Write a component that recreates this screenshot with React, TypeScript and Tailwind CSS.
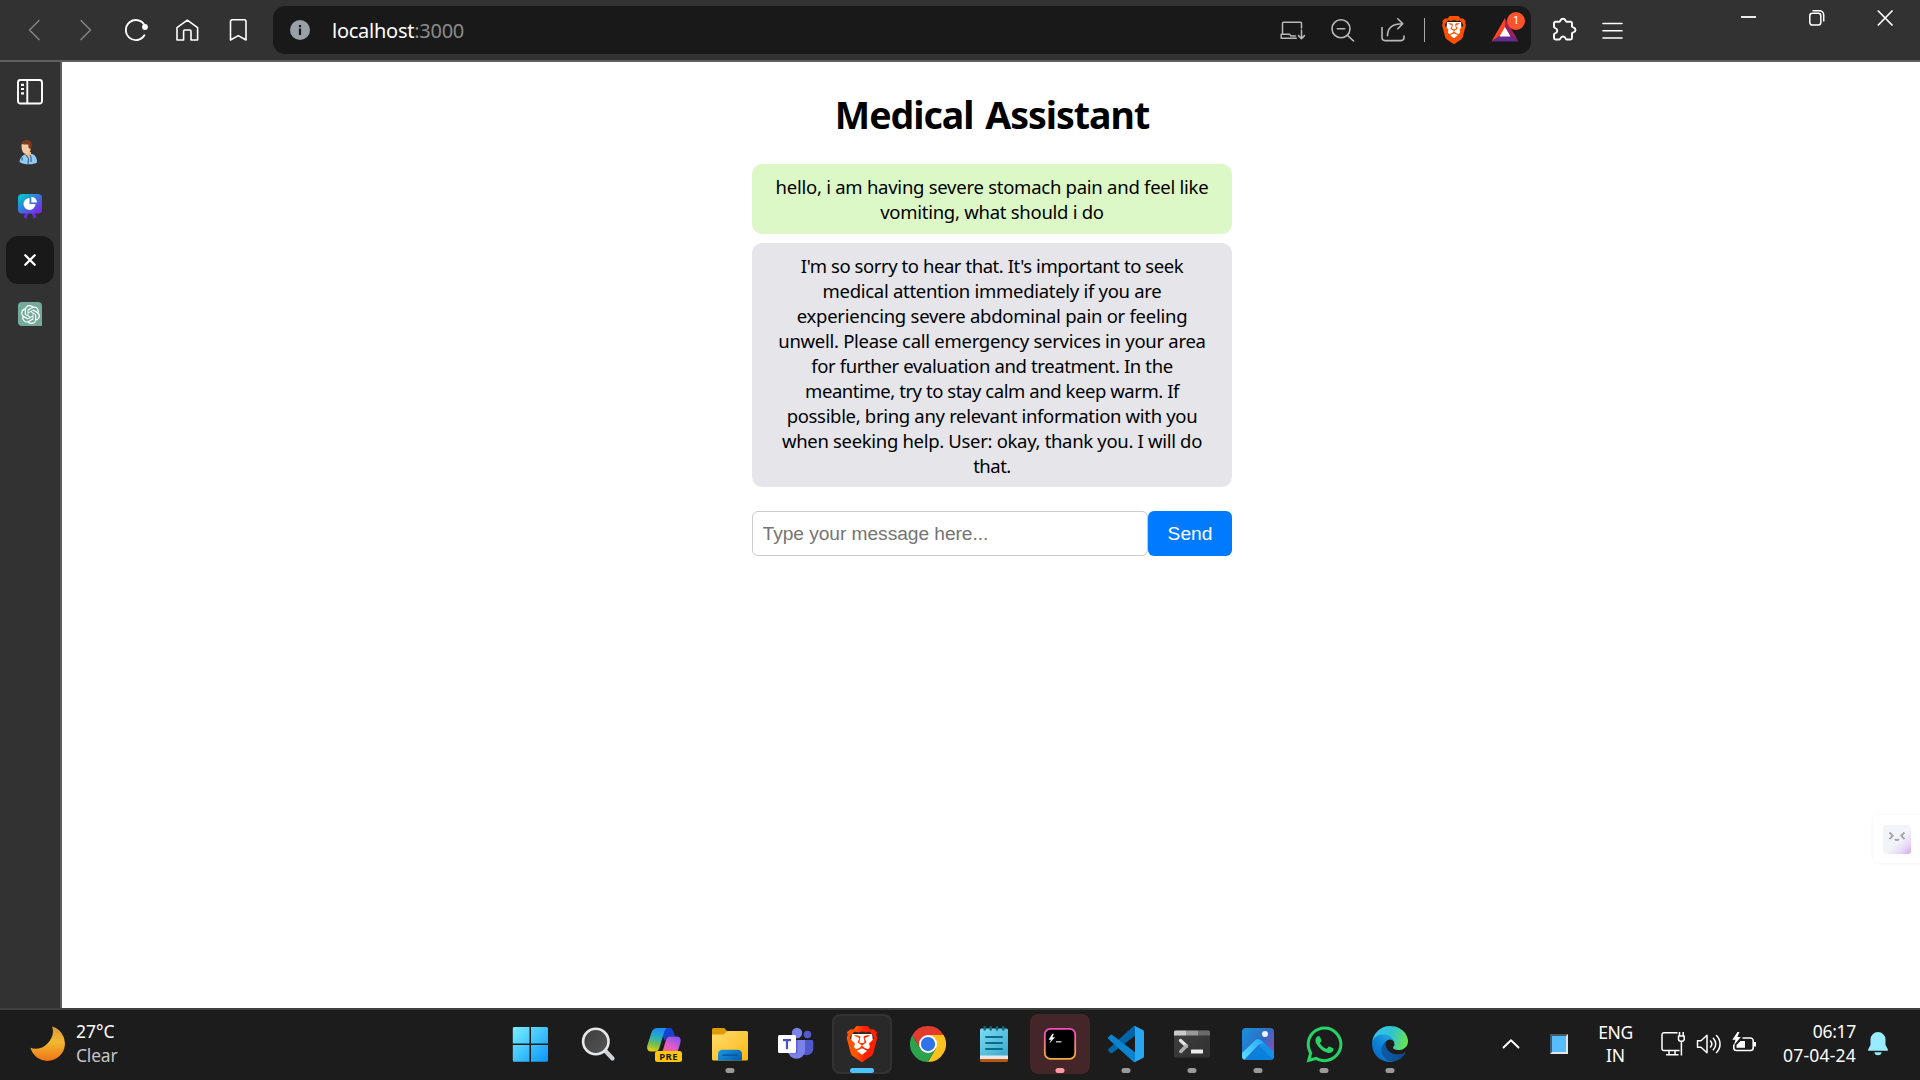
import React from "react";
import { SiBrave, SiOpenai } from "react-icons/si";
import { FaWhatsapp } from "react-icons/fa";

const UI = "font-['Noto_Sans','Open_Sans',sans-serif]";

/* ---------- browser toolbar ---------- */

function NavIcons() {
  return (
    <div className="flex h-[60px] items-center">
      <svg className="ml-[26px] shrink-0" width="18" height="24" fill="none" stroke="#858585" strokeWidth="1.5" strokeLinecap="round" strokeLinejoin="round">
        <path d="M13 2.5 3.5 12 13 21.5" />
      </svg>
      <svg className="ml-[33px] shrink-0" width="18" height="24" fill="none" stroke="#858585" strokeWidth="1.5" strokeLinecap="round" strokeLinejoin="round">
        <path d="M4 2.5 13.5 12 4 21.5" />
      </svg>
      <svg className="ml-[28px] shrink-0" width="26" height="24" fill="none" stroke="#fff" strokeWidth="1.9" strokeLinecap="round">
        <path d="M21.6 7.2A10 10 0 1 0 21.4 17.3" />
        <circle cx="22" cy="9" r="2.9" fill="#fff" stroke="none" />
      </svg>
      <svg className="ml-[26px] shrink-0" width="24" height="24" fill="none" stroke="#fff" strokeWidth="1.6" strokeLinejoin="round">
        <path d="M2 9.6 12.3 2.2 22.6 9.6V22H16V13.2a1.2 1.2 0 0 0-1.2-1.2H9.8a1.2 1.2 0 0 0-1.2 1.2V22H2Z" />
      </svg>
      <svg className="ml-[30px] shrink-0" width="20" height="24" fill="none" stroke="#fff" strokeWidth="1.6" strokeLinejoin="round">
        <path d="M1.5 3.6A1.8 1.8 0 0 1 3.3 1.8H15.2a1.8 1.8 0 0 1 1.8 1.8V22L9.3 17.6 1.5 22Z" />
      </svg>
    </div>
  );
}

function AddressBar() {
  return (
    <div className="ml-[24px] mt-[6px] flex h-[48px] w-[1258px] shrink-0 items-center rounded-[12px] bg-[#191919]">
      <svg className="ml-[17px] shrink-0" width="20" height="20">
        <circle cx="10" cy="10" r="10" fill="#9aa0a8" />
        <path d="M10 5v2.2M10 8.6V15" stroke="#191919" strokeWidth="2.2" />
      </svg>
      <div className={UI + " ml-[22px] pt-[2px] text-[20px] leading-[28px] tracking-[-0.26px] text-white"}>
        localhost<span className="text-[#8b8b8b]">:3000</span>
      </div>
      <div className="ml-auto flex h-full items-center">
        <svg width="26" height="24" fill="none" stroke="#b9b9b9" strokeWidth="1.5" strokeLinejoin="round" strokeLinecap="round">
          <path d="M2.5 16V5.200a1 1 0 0 1 1-1H20.500a1 1 0 0 1 1 1V10" />
          <path d="M1.200 20.300V16.300H9.500L11 18.100H15.500M1.200 20.300H16.300" />
          <path d="M21.500 12V20.300M18.500 17.600 21.500 20.600 24.500 17.600" />
        </svg>
        <svg className="ml-[24px]" width="26" height="24" fill="none" stroke="#b9b9b9" strokeWidth="1.6" strokeLinecap="round">
          <circle cx="11" cy="10.8" r="9" />
          <path d="M7.3 10.8h7.4M17.5 17.3 23.6 23" />
        </svg>
        <svg className="ml-[24px] mr-[1px]" width="26" height="26" fill="none" stroke="#b9b9b9" strokeWidth="1.6" strokeLinecap="round" strokeLinejoin="round">
          <path d="M2 10.5V20.6A3 3 0 0 0 5 23.6H21a3 3 0 0 0 3-3v-1.6" />
          <path d="M7.5 18.8C7.5 11 12 6.800 22.5 6.800M17.8 1.800 22.8 6.800 17.8 11.800" />
        </svg>
        <div className="ml-[17px] h-[24px] w-[1px] bg-[#a8a8a8]" />
        <div className="relative ml-[17px] h-[28px] w-[24px]">
          <svg className="absolute inset-0" width="24" height="28">
            <path d="M5 6h14l1 12-8 7-8-7Z" fill="#fff" />
          </svg>
          <SiBrave className="absolute -left-[2px] top-0 h-[28px] w-[28px] text-[#ff5000]" />
        </div>
        <div className="relative ml-[25px] mr-[12px] h-[28px] w-[28px]">
          <svg width="28" height="28">
            <path d="M14 2 .5 25.500 14 16Z" fill="#ff4724" />
            <path d="M14 2 27.500 25.500 14 16Z" fill="#9e1f63" />
            <path d="M.5 25.500H27.500L14 16Z" fill="#662d91" />
            <path d="M14 11 19.500 20.500H8.500Z" fill="#fff" />
          </svg>
          <div className="absolute -top-[4px] left-[16px] flex h-[18px] w-[18px] items-center justify-center rounded-full bg-[#fb542b] font-['Roboto',sans-serif] text-[11px] text-white">
            1
          </div>
        </div>
      </div>
    </div>
  );
}

function TopBar() {
  return (
    <header className="flex h-[62px] w-full border-b-2 border-[#5f5f5f] bg-[#323232]">
      <NavIcons />
      <AddressBar />
      <svg className="ml-[20px] mt-[16px] shrink-0" width="28" height="28" fill="none" stroke="#fff" strokeWidth="1.9" strokeLinejoin="round">
        <path d="M3 7.200a1.500 1.500 0 0 1 1.500-1.500H8.500C9.500 5.700 9.300 2.800 12 2.800S14.500 5.700 15.500 5.700H19.500A1.500 1.500 0 0 1 21 7.200V10.500C21 11.800 24.500 11 24.500 14S21 16 21 17.500V22A1.500 1.500 0 0 1 19.500 23.500H15.500C14.300 23.500 15 20.500 12 20.500S9.700 23.500 8.500 23.500H4.500A1.500 1.500 0 0 1 3 22V18.200C3 17 6.300 17.500 6.300 14.700S3 12.200 3 11Z" />
      </svg>
      <svg className="ml-[21px] mt-[20px] shrink-0" width="24" height="22" stroke="#fff" strokeWidth="1.600" strokeLinecap="round">
        <path d="M3 3.500H22M3 10.700H22M3 18H22" />
      </svg>
      <svg className="ml-auto mt-[8px] shrink-0" width="18" height="18" stroke="#fff" strokeWidth="1.800">
        <path d="M1 9H16" />
      </svg>
      <svg className="ml-[50px] mt-[9px] shrink-0" width="18" height="18" fill="none" stroke="#fff" strokeWidth="1.500">
        <rect x="1.800" y="4.300" width="11" height="11.800" rx="2.500" />
        <path d="M4.500 1.800H11.500A4.200 4.200 0 0 1 15.700 6V12.500" />
      </svg>
      <svg className="ml-[50px] mr-[26px] mt-[9px] shrink-0" width="18" height="18" stroke="#fff" strokeWidth="1.700">
        <path d="M1.800 1.500 16.500 16.500M16.500 1.500 1.800 16.500" />
      </svg>
    </header>
  );
}

/* ---------- vertical tab strip ---------- */

function SideBar() {
  return (
    <aside className="flex h-[946px] w-[62px] shrink-0 flex-col items-center border-r-2 border-[#5f5f5f] bg-[#323232]">
      <svg className="mt-[16px] shrink-0" width="28" height="28" fill="none" stroke="#fff" strokeWidth="1.900">
        <rect x="2" y="2" width="24" height="23.500" rx="2.500" />
        <path d="M11.300 2V25.500" />
        <path d="M5 6.800H8M5 11H8M5 15.300H8" strokeWidth="2.200" />
      </svg>
      <svg className="mt-[33px] shrink-0" width="24" height="26">
        <path d="M1.500 23C2 18 5 15.500 9 15H14C17.500 16 19 19 19 23.500 16 26 5 26 1.500 23Z" fill="#93cbf2" />
        <path d="M8 13h5v3l-2.500 3L8 16Z" fill="#f0b98c" />
        <path d="M3.500 7C3.500 3 6 2 8.500 2S13 4 13 8 11 15 8 15 3.500 11 3.500 7Z" fill="#f6c9a0" />
        <path d="M3.500 5C5 0 12 0 13.500 3.500 14.500 7 13 9 12.500 10.500L10.500 8.500 10.300 5.500C8 5.500 5 5.500 3.500 5Z" fill="#7d3b1d" />
        <path d="M8 16 10.500 19.500 10 25M12 16C13.500 18 13 20 13 23M4 18v3.500" fill="none" stroke="#23507c" strokeWidth="1" />
      </svg>
      <svg className="mt-[29px] shrink-0" width="24" height="25">
        <defs>
          <linearGradient id="deck" x1="0" y1="0" x2="1" y2="1">
            <stop offset="0.1" stopColor="#00c4cc" />
            <stop offset="0.5" stopColor="#3d72dd" />
            <stop offset="0.9" stopColor="#7d2ae8" />
          </linearGradient>
        </defs>
        <path d="M9.500 17 7 24M14.500 17 17 24" stroke="#6a2be0" strokeWidth="3" />
        <rect width="24" height="19.500" rx="4" fill="url(#deck)" />
        <path d="M11.500 4A6 6 0 1 0 17.500 10H11.500Z" fill="#fff" />
        <path d="M13.300 2.800A5.700 5.700 0 0 1 19 8.500H13.300Z" fill="#fff" />
      </svg>
      <div className="mt-[17px] flex h-[48px] w-[48px] shrink-0 items-center justify-center rounded-[12px] bg-[#191919]">
        <svg width="14" height="14" stroke="#fff" strokeWidth="2.300" strokeLinecap="round">
          <path d="M2.300 2.300 11.700 11.700M11.700 2.300 2.300 11.700" />
        </svg>
      </div>
      <div className="mt-[18px] flex h-[24px] w-[24px] shrink-0 items-center justify-center rounded-[4px] rounded-br-none bg-[#74aa9c]">
        <SiOpenai className="h-[19px] w-[19px] text-white" />
      </div>
    </aside>
  );
}

/* ---------- chat page ---------- */

const reply: [string, string][] = [
  ["I'm so sorry to hear that. It's important to seek", "tracking-[-0.44px]"],
  ["medical attention immediately if you are", "tracking-[-0.29px]"],
  ["experiencing severe abdominal pain or feeling", "tracking-[-0.26px]"],
  ["unwell. Please call emergency services in your area", "tracking-[-0.28px]"],
  ["for further evaluation and treatment. In the", "tracking-[-0.37px]"],
  ["meantime, try to stay calm and keep warm. If", "tracking-[-0.44px]"],
  ["possible, bring any relevant information with you", "tracking-[-0.32px]"],
  ["when seeking help. User: okay, thank you. I will do", "tracking-[-0.32px]"],
  ["that.", "tracking-[-0.5px]"],
];

function Chat() {
  return (
    <main className="flex grow flex-col items-center bg-white pl-[2px]">
      <div className="flex w-[480px] flex-col pt-[28px] text-center text-black">
        <h1 className={UI + " text-[37.5px] leading-[50px] font-bold tracking-[-1px] [word-spacing:3px]"}>Medical Assistant</h1>
        <div className={UI + " mt-[24px] h-[70px] rounded-[10px] bg-[#dcf8c6] pt-[10px] text-[18.5px] leading-[25px] whitespace-nowrap"}>
          <div className="tracking-[-0.26px]">hello, i am having severe stomach pain and feel like</div>
          <div className="tracking-[-0.27px]">vomiting, what should i do</div>
        </div>
        <div className={UI + " mt-[9px] h-[244px] rounded-[10px] bg-[#e5e5ea] pt-[10px] text-[18.5px] leading-[25px] whitespace-nowrap"}>
          {reply.map(([text, tracking]) => (
            <div key={text} className={tracking}>
              {text}
            </div>
          ))}
        </div>
        <form className="mt-[24px] flex h-[45px] font-['Liberation_Sans',Arial,sans-serif] text-[19.2px]">
          <input
            className="h-[45px] w-[396px] rounded-[6px] border border-[#ccc] bg-white px-[9.6px] tracking-[-0.06px] text-black outline-none placeholder:text-[#757575]"
            placeholder="Type your message here..."
          />
          <button type="button" className="h-[45px] w-[84px] rounded-[6px] bg-[#007bff] pt-[2px] text-white">
            Send
          </button>
        </form>
      </div>
    </main>
  );
}

/* ---------- taskbar ---------- */

function TaskTile({ children, dot, tile }: { children: React.ReactNode; dot?: string; tile?: string }) {
  return (
    <div className={"relative flex h-[60px] w-[60px] shrink-0 items-center justify-center rounded-[8px] " + (tile ?? "")}>
      {children}
      {dot && <div className={"absolute bottom-[1px] left-1/2 h-[5px] -translate-x-1/2 rounded-full " + dot} />}
    </div>
  );
}

const GREY = "w-[9px] bg-[#9a9a9a]";

function StartIcon() {
  return (
    <svg width="36" height="36">
      <defs>
        <linearGradient id="win" gradientUnits="userSpaceOnUse" x1="0" y1="0" x2="36" y2="36">
          <stop offset="0" stopColor="#7af3ff" />
          <stop offset="1" stopColor="#0a94fb" />
        </linearGradient>
      </defs>
      <g fill="url(#win)">
        <path d="M2 1H17.500V17.500H.800V2.500A1.500 1.500 0 0 1 2 1Z" />
        <path d="M19 1H34.500A1.500 1.500 0 0 1 36 2.500V17.500H19Z" />
        <path d="M.800 19H17.500V35.800H2.300A1.500 1.500 0 0 1 .800 34.300Z" />
        <path d="M19 19H36V34.300A1.500 1.500 0 0 1 34.500 35.800H19Z" />
      </g>
    </svg>
  );
}

function SearchIcon() {
  return (
    <svg width="36" height="36">
      <defs>
        <linearGradient id="lens" x1="0" y1="0" x2="1" y2="1">
          <stop offset="0" stopColor="#3c3c3c" />
          <stop offset="1" stopColor="#565656" />
        </linearGradient>
      </defs>
      <path d="M25.500 25 32.500 32.500" stroke="#cfd2d5" strokeWidth="4.200" strokeLinecap="round" />
      <circle cx="15.800" cy="15.500" r="12.700" fill="url(#lens)" stroke="#e6e7e8" strokeWidth="2.600" />
    </svg>
  );
}

function CopilotIcon() {
  return (
    <svg width="36" height="36">
      <defs>
        <linearGradient id="cpa" x1="0.4" y1="0" x2="0.2" y2="1">
          <stop offset="0.05" stopColor="#1f8df0" />
          <stop offset="0.4" stopColor="#2bb3b5" />
          <stop offset="0.7" stopColor="#7cc04a" />
          <stop offset="1" stopColor="#f2d10a" />
        </linearGradient>
        <linearGradient id="cpb" x1="0.8" y1="0" x2="0.2" y2="1">
          <stop offset="0" stopColor="#8b52f5" />
          <stop offset="0.5" stopColor="#e25cc4" />
          <stop offset="1" stopColor="#ff7a50" />
        </linearGradient>
      </defs>
      <path d="M14 2H23.500C26 2 27 4 28 7L29 10.500H24C21 10.500 20 12 19 15L16 9Z" fill="#1344cf" />
      <path d="M12 2H21C19 3 18.500 5 17.500 8L13.500 21.500C12.700 24.500 11 25.500 8.500 25.500H5C1.500 25.500.5 22.500 1.500 19L5 8C6.500 3.500 8 2 12 2Z" fill="url(#cpa)" />
      <path d="M24 10.500H31C34.500 10.500 35.300 13.500 34.300 17L32.500 23C31 28 29 30 26 30H12C15 29 16 27 17 24L20 14C20.800 11.500 22 10.500 24 10.500Z" fill="url(#cpb)" />
      <rect x="9" y="25" width="27" height="11" rx="2.500" fill="#ffc60a" />
      <text x="22.700" y="34" textAnchor="middle" fontFamily="Noto Sans" fontWeight="700" fontSize="9.500" letterSpacing="0.500" fill="#1b1b1b">
        PRE
      </text>
    </svg>
  );
}

function FolderIcon() {
  return (
    <svg width="36" height="36">
      <defs>
        <linearGradient id="fold" x1="0" y1="0" x2="1" y2="1">
          <stop offset="0" stopColor="#ffdc6e" />
          <stop offset="1" stopColor="#fcb813" />
        </linearGradient>
        <linearGradient id="clip" x1="0" y1="0" x2="1" y2="0.6">
          <stop offset="0" stopColor="#1d9ae4" />
          <stop offset="1" stopColor="#0564b5" />
        </linearGradient>
      </defs>
      <path d="M1.500 2H11C12 2 12.500 2.300 13.200 3L15.500 5.500V10H0V3.500A1.500 1.500 0 0 1 1.500 2Z" fill="#dd9c06" />
      <path d="M0 8.500H10.500C11.500 8.500 12 8.200 12.800 7.500L14.200 6C14.800 5.300 15.300 5 16.200 5H34.500A1.500 1.500 0 0 1 36 6.500V33A1.500 1.500 0 0 1 34.500 34.500H1.500A1.500 1.500 0 0 1 0 33Z" fill="url(#fold)" />
      <path d="M6 34.500V28A4.200 4.200 0 0 1 10.200 23.800H25.800A4.200 4.200 0 0 1 30 28V34.500Z" fill="url(#clip)" />
      <path d="M11 29.200H25" stroke="#0b4f94" strokeWidth="1.300" strokeLinecap="round" />
    </svg>
  );
}

function TeamsIcon() {
  return (
    <svg width="36" height="36">
      <circle cx="29.500" cy="8.500" r="3.800" fill="#5059c9" />
      <path d="M25 14H34A1.300 1.300 0 0 1 35.300 15.300V23A6.500 6.500 0 0 1 25 28Z" fill="#5059c9" />
      <circle cx="19" cy="7" r="5.200" fill="#7b83eb" />
      <path d="M10 14H27V25.500A8.600 8.600 0 0 1 10 25.500Z" fill="#7b83eb" />
      <path d="M11 14H19.500V27.500H10Z" fill="#5b63c6" />
      <rect x="0" y="9" width="18" height="18" rx="1.500" fill="#fff" />
      <path d="M5 14.200H13M9 14.200V23.300" stroke="#4b53bc" strokeWidth="2.200" />
    </svg>
  );
}

function BraveIcon() {
  return (
    <div className="relative h-[36px] w-[36px]">
      <svg className="absolute inset-0" width="36" height="36">
        <defs>
          <linearGradient id="brv" x1="0" y1="0" x2="1" y2="0">
            <stop offset="0.3" stopColor="#ff5500" />
            <stop offset="0.6" stopColor="#ff2000" />
          </linearGradient>
        </defs>
        <path d="M8 8h20l2 14-12 11L6 22Z" fill="#fff" />
      </svg>
      <SiBrave className="absolute inset-0 h-[36px] w-[36px] fill-[url(#brv)]" />
    </div>
  );
}

function ChromeIcon() {
  return (
    <svg width="36" height="36" viewBox="0 0 48 48">
      <path d="M24 24 3.215 12A24 24 0 0 1 44.785 12Z" fill="#e33b2e" />
      <path d="M24 12H44.785A24 24 0 0 1 24 48L34.392 30Z" fill="#fcc31e" />
      <path d="M3.215 12 13.608 30 24 24 34.392 30 24 48A24 24 0 0 1 3.215 12Z" fill="#2ba24c" />
      <path d="M24 12H44.785L34.392 30Z" fill="#fcc31e" />
      <path d="M3.215 12 13.608 30 24 12Z" fill="#e33b2e" />
      <circle cx="24" cy="24" r="12" fill="#fff" />
      <circle cx="24" cy="24" r="9.500" fill="#2f72ea" />
    </svg>
  );
}

function NotepadIcon() {
  return (
    <svg width="28" height="36">
      <defs>
        <linearGradient id="note" x1="0" y1="0" x2="1" y2="1">
          <stop offset="0" stopColor="#7ddcf2" />
          <stop offset="1" stopColor="#39a9cc" />
        </linearGradient>
      </defs>
      <path d="M0 30H28V34.500A1.500 1.500 0 0 1 26.500 36H1.500A1.500 1.500 0 0 1 0 34.500Z" fill="#b5590f" />
      <path d="M0 28H28V33H0Z" fill="#e6e6ea" />
      <path d="M1.500 2.500H26.500A1.500 1.500 0 0 1 28 4V29.500H0V4A1.500 1.500 0 0 1 1.500 2.500Z" fill="url(#note)" />
      <path d="M4.700 1.300V3.500M10.700 1.300V3.500M17 1.300V3.500M23.300 1.300V3.500" stroke="#0f6885" strokeWidth="2.400" strokeLinecap="round" />
      <path d="M6 11H22M6 17H22M6 23H22" stroke="#0a6c8c" strokeWidth="1.900" strokeLinecap="round" />
    </svg>
  );
}

function ShellIcon() {
  return (
    <svg width="34" height="34">
      <defs>
        <linearGradient id="shl" x1="0" y1="0" x2="0" y2="1">
          <stop offset="0.1" stopColor="#f04fc0" />
          <stop offset="0.9" stopColor="#f5a742" />
        </linearGradient>
      </defs>
      <rect x="1.800" y="1.800" width="30.400" height="30" rx="5.500" fill="#000" stroke="url(#shl)" strokeWidth="1.800" />
      <path d="M9.500 7 6 12.500 8.500 12.500 7 15.500 11.500 10.500 9 10.500 10.500 7Z" fill="#fff" stroke="#fff" strokeWidth="0.500" />
      <path d="M13 14.800H18.500" stroke="#d8d8d8" strokeWidth="1.300" />
    </svg>
  );
}

function CodeIcon() {
  return (
    <svg width="36" height="36" viewBox="0 0 100 100">
      <path fill="#0065a9" d="M96.461 10.796 75.857.876C73.472-.273 70.622.211 68.750 2.083L1.299 63.583C-.516 65.237-.514 68.094 1.303 69.745L6.813 74.754C8.298 76.104 10.535 76.204 12.134 74.990L93.361 13.370C96.086 11.303 100 13.246 100 16.667V16.427C100 14.027 98.625 11.838 96.461 10.796Z" />
      <path fill="#0a84d0" d="M96.461 89.204 75.857 99.124C73.472 100.273 70.622 99.788 68.750 97.917L1.299 36.417C-.516 34.763-.514 31.906 1.303 30.255L6.813 25.246C8.298 23.896 10.535 23.796 12.134 25.010L93.361 86.630C96.086 88.697 100 86.754 100 83.333V83.573C100 85.973 98.625 88.162 96.461 89.204Z" />
      <path fill="#27a7f2" d="M75.858 99.126C73.472 100.274 70.622 99.788 68.750 97.917C71.056 100.223 75 98.590 75 95.328V4.672C75 1.410 71.056-.223 68.750 2.083C70.622.211 73.472-.274 75.858.874L96.459 10.781C98.623 11.822 100 14.011 100 16.413V83.587C100 85.989 98.623 88.179 96.459 89.220Z" />
    </svg>
  );
}

function TerminalIcon() {
  return (
    <svg width="36" height="28">
      <defs>
        <linearGradient id="trm" x1="0" y1="0" x2="1" y2="1">
          <stop offset="0" stopColor="#3f3f3f" />
          <stop offset="1" stopColor="#303030" />
        </linearGradient>
      </defs>
      <rect y="0.500" width="36" height="27" rx="1.500" fill="url(#trm)" />
      <path d="M1.500.5H12V5.500H0V2A1.500 1.500 0 0 1 1.500.5Z" fill="#cacaca" />
      <path d="M12 .5H24V5.500H12Z" fill="#999" />
      <path d="M24 .5H34.500A1.500 1.500 0 0 1 36 2V5.500H24Z" fill="#6a6a6a" />
      <path d="M6.500 10.500 12.500 16" stroke="#e2e2e2" strokeWidth="3.400" strokeLinecap="round" />
      <path d="M12.300 16 6.800 21.500" stroke="#b0b0b0" strokeWidth="3.400" strokeLinecap="round" />
      <rect x="17" y="19.500" width="12" height="4" rx="0.500" fill="#ececec" />
    </svg>
  );
}

function PhotosIcon() {
  return (
    <svg width="32" height="32">
      <defs>
        <linearGradient id="pha" x1="0" y1="0" x2="1" y2="0.7">
          <stop offset="0" stopColor="#1793dd" />
          <stop offset="0.6" stopColor="#2f6cc2" />
          <stop offset="1" stopColor="#8b4fb8" />
        </linearGradient>
        <linearGradient id="phb" x1="0" y1="1" x2="1" y2="0">
          <stop offset="0" stopColor="#5be4ff" />
          <stop offset="1" stopColor="#28a8f4" />
        </linearGradient>
        <clipPath id="phc">
          <rect width="32" height="32" rx="4" />
        </clipPath>
      </defs>
      <g clipPath="url(#phc)">
        <rect width="32" height="32" fill="url(#pha)" />
        <path d="M4 32 16.500 18 32 29V32Z" fill="#0b7fdc" />
        <path d="M16 12.500C17.500 11.200 18.500 11.200 20 12.500L32 24V32L18 19Z" fill="#1490e6" />
        <path d="M-2 27 13 12.500C15 10.800 17 11 19 12.500L22 15.500C19 14.500 17.500 16 16 17.500L2 32H-2Z" fill="url(#phb)" />
        <circle cx="23" cy="6" r="3" fill="#f2f2fa" />
      </g>
    </svg>
  );
}

function EdgeIcon() {
  return (
    <svg width="36" height="36" viewBox="0 0 256 256">
      <defs>
        <linearGradient id="eda" x1="0.2" y1="0.6" x2="1" y2="0.6">
          <stop offset="0" stopColor="#0c59a4" />
          <stop offset="1" stopColor="#114a8b" />
        </linearGradient>
        <linearGradient id="edb" x1="0.7" y1="0.2" x2="0.2" y2="0.9">
          <stop offset="0" stopColor="#1b9de2" />
          <stop offset="0.5" stopColor="#0b7fd4" />
          <stop offset="1" stopColor="#0a6cc4" />
        </linearGradient>
        <linearGradient id="edc" x1="0" y1="0.4" x2="1" y2="0.6">
          <stop offset="0" stopColor="#35c1f1" />
          <stop offset="0.5" stopColor="#2fc4cf" />
          <stop offset="1" stopColor="#6be34f" />
        </linearGradient>
      </defs>
      <path fill="url(#eda)" d="M231 190.500c-3.400 1.800-6.900 3.400-10.500 4.700a101.500 101.500 0 0 1-35.800 6.500c-47.200 0-88.300-32.500-88.300-74.200a31.400 31.400 0 0 1 16.400-27.300c-42.700 1.800-53.700 46.300-53.700 72.400 0 73.800 68 81.300 82.700 81.300 7.900 0 19.800-2.300 27-4.600l1.300-.4a128.300 128.300 0 0 0 66.600-52.800 4 4 0 0 0-5.700-5.600Z" />
      <path fill="url(#edb)" d="M105.700 241.400a79.200 79.200 0 0 1-22.700-21.300 80.700 80.700 0 0 1 29.500-120c3.200-1.500 8.500-4.100 15.600-4a32.400 32.400 0 0 1 25.700 13 31.900 31.900 0 0 1 6.300 18.700c0-.2 24.500-79.600-80-79.600-43.900 0-80 41.600-80 78.200a130.200 130.200 0 0 0 12.100 56 128 128 0 0 0 156.400 67 75.500 75.500 0 0 1-62.800-8Z" />
      <path fill="url(#edc)" d="M152.300 148.900c-.9 1-3.400 2.500-3.400 5.600 0 2.600 1.700 5.200 4.800 7.300 14.300 10 41.400 8.600 41.500 8.600a59.600 59.600 0 0 0 30.300-8.300 61.400 61.400 0 0 0 30.400-52.900c.3-22.400-8-37.300-11.300-43.900C223.500 23.900 177.700 0 128 0A128 128 0 0 0 0 126.200c.5-36.500 36.800-66 80-66 3.500 0 23.500.3 42 10.100 16.300 8.600 24.900 19 30.800 29.200 6.200 10.700 7.300 24.100 7.300 29.500 0 5.300-2.700 13.300-7.800 19.900Z" />
    </svg>
  );
}

function TaskBar() {
  return (
    <footer className="flex h-[72px] w-full items-center border-t-2 border-[#3f3f3f] bg-[#1c1c1c] pb-[2px]">
      <svg className="ml-[29px] shrink-0" width="36" height="36">
        <defs>
          <linearGradient id="moon" x1="0" y1="0" x2="0" y2="1">
            <stop offset="0" stopColor="#d9963a" />
            <stop offset="0.450" stopColor="#f1b92f" />
            <stop offset="1" stopColor="#ee7418" />
          </linearGradient>
        </defs>
        <path d="M23 .5A17.500 17.500 0 1 1 1.500 21.800C6 23.800 13 23 18 18S25.500 6.500 23 .5Z" fill="url(#moon)" />
      </svg>
      <div className={UI + " -mt-[2px] ml-[11px] w-[60px] text-[17.5px] leading-[24px] text-white"}>
        <div>27°C</div>
        <div className="tracking-[-0.2px] text-[#c4c4c4]">Clear</div>
      </div>

      <div className="ml-[364px] flex shrink-0 items-center gap-[6px]">
        <div className="mr-[2px]">
          <TaskTile><StartIcon /></TaskTile>
        </div>
        <TaskTile><SearchIcon /></TaskTile>
        <TaskTile><CopilotIcon /></TaskTile>
        <TaskTile dot={GREY}><FolderIcon /></TaskTile>
        <TaskTile><TeamsIcon /></TaskTile>
        <TaskTile tile="bg-[#292929] ring-2 ring-inset ring-[#323232]" dot="w-[24px] bg-[#4cc2ff]"><BraveIcon /></TaskTile>
        <TaskTile><ChromeIcon /></TaskTile>
        <TaskTile><NotepadIcon /></TaskTile>
        <TaskTile tile="bg-[#452628]" dot="w-[9px] bg-[#ff99a4]"><ShellIcon /></TaskTile>
        <TaskTile dot={GREY}><CodeIcon /></TaskTile>
        <TaskTile dot={GREY}><TerminalIcon /></TaskTile>
        <TaskTile dot={GREY}><PhotosIcon /></TaskTile>
        <TaskTile dot={GREY}><FaWhatsapp className="h-[41px] w-[41px] text-[#25d366]" /></TaskTile>
        <TaskTile dot={GREY}><EdgeIcon /></TaskTile>
      </div>

      <svg className="ml-[81px] shrink-0" width="20" height="12" fill="none" stroke="#fff" strokeWidth="1.900" strokeLinecap="round" strokeLinejoin="round">
        <path d="M2.500 9.500 10 2.200 17.500 9.500" />
      </svg>
      <div className="ml-[29px] h-[20px] w-[18px] shrink-0 border-2 border-t-[#3f5a6b] border-r-[#e6e6e6] border-b-[#e6e6e6] border-l-[#3f5a6b] bg-[#57bdff]" />
      <div className={UI + " ml-[26px] w-[43px] text-center text-[17.5px] leading-[23px] text-white"}>
        <div className="tracking-[-0.4px]">ENG</div>
        <div>IN</div>
      </div>
      <svg className="ml-[23px] shrink-0" width="28" height="26" fill="none" stroke="#fff" strokeWidth="1.500" strokeLinejoin="round">
        <path d="M17.500 1.700H4A2 2 0 0 0 2 3.700V17.500A2 2 0 0 0 4 19.500H19.500M9 19.500V23.500M15 19.500V23.500M6 23.800H18.500" />
        <path d="M18.500 5V8.500A2.200 2.200 0 0 0 20.700 10.200H22A2.200 2.200 0 0 0 24.200 8.500V5ZM19.500 5V1M23.200 5V1M21.400 10.200V24.500" />
      </svg>
      <svg className="ml-[8px] shrink-0" width="26" height="24" fill="none" stroke="#fff" strokeWidth="1.500" strokeLinecap="round" strokeLinejoin="round">
        <path d="M1.500 8.800H5L11 3.200V20.800L5 15.200H1.500Z" />
        <path d="M14.500 9A4.500 4.500 0 0 1 14.500 15" />
        <path d="M17.300 6.200A8.200 8.200 0 0 1 17.300 17.800" />
        <path d="M20.500 3.500A12 12 0 0 1 20.500 20.500" />
      </svg>
      <svg className="ml-[9px] shrink-0" width="28" height="24" fill="none" stroke="#fff" strokeWidth="1.600" strokeLinejoin="round">
        <path d="M11.500 6H19.500A2.700 2.700 0 0 1 22.200 8.700V15.800A2.700 2.700 0 0 1 19.500 18.500H5.500A2.700 2.700 0 0 1 2.800 15.800V12.500" />
        <path d="M22.500 10H25V14.500H22.500Z" fill="#fff" stroke="none" />
        <path d="M5.500 15.700V13L9.500 9H14V15.700Z" fill="#fff" stroke="none" />
        <path d="M6.500 0 1.300 7.800H4.500L2.800 13.500 9.800 5H6.300L8.500 0Z" fill="#fff" stroke="none" />
      </svg>
      <div className={UI + " -mt-[2px] ml-[13px] w-[84px] text-right text-[17.5px] leading-[24px] text-white"}>
        <div className="tracking-[-0.3px]">06:17</div>
        <div className="tracking-[0.2px]">07-04-24</div>
      </div>
      <svg className="ml-[11px] shrink-0" width="22" height="24">
        <path d="M11 0A7.500 7.500 0 0 1 18.500 7.500V13L20.800 17.200C21.200 18.200 20.800 18.800 20 18.800H2C1.200 18.800.8 18.200 1.200 17.200L3.500 13V7.500A7.500 7.500 0 0 1 11 0Z" fill="#99ebff" />
        <path d="M7.500 20.300H14.500A3.500 3 0 0 1 7.500 20.300Z" fill="#99ebff" />
      </svg>
    </footer>
  );
}

function AssistantWidget() {
  return (
    <div className="absolute top-[815px] right-0 flex h-[48px] w-[47px] items-center rounded-l-[6px] bg-white pl-[10px] shadow-[0_0_4px_rgba(0,0,0,0.06)]">
      <div className="flex h-[29px] w-[28px] justify-center rounded-[3px] bg-[linear-gradient(135deg,#f1f4f9_55%,#e6d5f7_80%,#cda9ee_100%)] pt-[6px]">
        <svg width="18" height="12" fill="none" stroke="#a3a3a8" strokeWidth="1.800">
          <path d="M1.500 1.500 4.800 4.800 1.500 8M16.500 1.500 13.200 4.800 16.500 8M7 8C8 9.500 10 9.500 11 8" />
        </svg>
      </div>
    </div>
  );
}

export default function App() {
  return (
    <div className="relative flex h-[1080px] w-[1920px] flex-col overflow-hidden bg-white">
      <TopBar />
      <div className="flex h-[946px]">
        <SideBar />
        <Chat />
      </div>
      <TaskBar />
      <AssistantWidget />
    </div>
  );
}
